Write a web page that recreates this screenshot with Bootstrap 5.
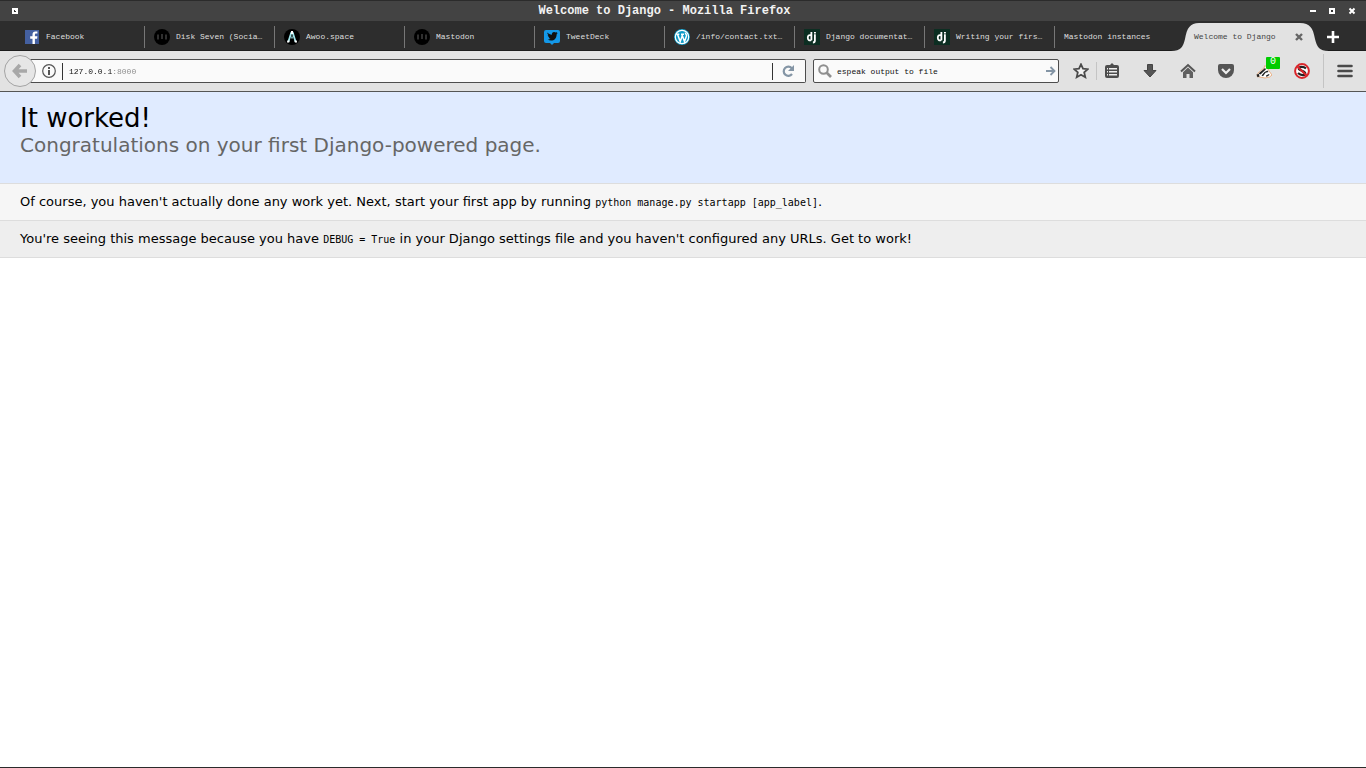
<!DOCTYPE html>
<html lang="en">
<head>
<meta charset="utf-8">
<meta name="viewport" content="width=device-width, initial-scale=1">
<title>Welcome to Django</title>
<link href="https://cdn.jsdelivr.net/npm/bootstrap@5.3.0/dist/css/bootstrap.min.css" rel="stylesheet">
<style>
  body { font-family: "DejaVu Sans", sans-serif; font-size: 13px; line-height: 16px; color: #000; border-bottom: 1px solid #2b2b2b; }
  button { background: none; border: 0; padding: 0; }
  svg { display: block; flex: none; }
  .chrome { font-family: "Liberation Mono", monospace; font-size: 8px; line-height: 12px; }
  .titlebar { height: 21px; background: #434343; border-top: 1px solid #2b2b2b; color: #f2f2f2; }
  .titlebar h1 { font-size: 12px; line-height: 20px; font-weight: 700; }
  .title-start { width: 27px; }
  .title-end { width: 64px; }
  .tabstrip { height: 30px; background: #2d2d2d; border-bottom: 1px solid #1c1c1c; padding-left: 15px; }
  .tab-item { flex: 0 1 130px; min-width: 0; height: 30px; padding: 2px 8px 0 9px; gap: 6px; color: #dedede; text-decoration: none; position: relative; }
  .tab-item::after { content: ""; position: absolute; right: 0; top: 5px; height: 22px; width: 1px; background: #777; }
  .tab-item span { position: relative; }
  .tab-current { color: #444; }
  .tab-current::after, .tab-last::after { display: none; }
  .tab-shape { position: absolute; left: -15px; top: 0; }
  .new-tab { width: 36px; height: 30px; padding-top: 2px; }
  .toolbar { height: 41px; background: #e2e2e2; border-bottom: 1px solid #555; padding-left: 4px; }
  .back-btn { position: relative; z-index: 1; margin-right: -10px; }
  .field { height: 24px; background: #fafafa; border: 1px solid #4d4d4d; border-radius: 2px; }
  .field input { border: 0; padding: 0; outline: 0; background-color: transparent; color: #111; min-width: 0; height: 22px; }
  .url-field { border-left: 0; border-radius: 0 2px 2px 0; padding-left: 16px; margin-right: 7px; gap: 6px; }
  .url-field .url-text { color: transparent; background-image: linear-gradient(90deg, #111 9ch, #888 9ch); -webkit-background-clip: text; background-clip: text; }
  .field-rule { width: 1px; height: 17px; background: #333; }
  .search-field { flex: 0 1 246px; padding: 0 2px 0 4px; margin-right: 7px; gap: 5px; }
  .tool-btn { width: 38px; height: 40px; }
  .slim-btn { width: 30px; }
  .menu-btn { width: 42px; }
  .bar-rule { width: 1px; height: 18px; background: #c4c4c4; }
  .bar-rule-tall { height: 34px; margin-left: 2px; }
  .count { position: absolute; left: 21px; top: 6px; width: 14px; height: 12px; line-height: 10px; font-size: 10px; border-radius: 1px; background: #0c0; color: #fff; }
  .summary { background: #e0ebff; padding: 10px 20px; height: 92px; border-bottom: 1px solid #ddd; }
  .summary h2 { font-size: 26px; line-height: 32px; font-weight: 400; }
  .summary p { font-size: 20px; line-height: 22px; color: #666; }
  .note { padding: 10px 20px; border-bottom: 1px solid #ddd; background: #f6f6f6; }
  .note-alt { background: #eee; }
  .note code { font-family: "DejaVu Sans Mono", monospace; font-size: 10px; line-height: 12px; color: #000; }
</style>
</head>
<body class="d-flex flex-column min-vh-100">
<svg class="d-none" aria-hidden="true">
  <symbol id="masto" viewBox="0 0 16 16"><circle cx="8" cy="8" r="8" fill="#000"/><path d="M4 5.500v5M8 5v5M12 5.500v5" fill="none" stroke="#303030" stroke-width="2"/></symbol>
  <symbol id="dj" viewBox="0 0 16 16"><path fill="#0c2e22" d="M0 0h16v16H0z"/><path d="M7.400 3v8.300M7.200 6.400C4.800 5.500 3.800 6.900 3.800 8.700c0 2.200 1.300 3.200 3.400 2.500M10.900 5.300v6.200c0 1.500-.6 2-2 2" fill="none" stroke="#fff" stroke-width="1.800"/><path fill="#fff" d="M10 3h1.900v1.600H10z"/></symbol>
</svg>

<header class="chrome">
  <div class="titlebar d-flex align-items-center justify-content-between">
    <div class="title-start d-flex">
      <button class="ms-2 ps-1" aria-label="Window menu"><svg width="6" height="6"><path fill="#fff" d="M0 0h6v6H0z"/><path fill="#333" d="M2 2h1v1h1v1H2z"/></svg></button>
    </div>
    <h1 class="m-0 text-truncate">Welcome to Django - Mozilla Firefox</h1>
    <div class="title-end d-flex align-items-center justify-content-end">
      <button aria-label="Window controls" class="me-2"><svg width="48" height="8"><path fill="#fff" d="M0 3h6v2H0zM19 1h6v6h-6z"/><path fill="#333" d="M21 3h2v2h-2z"/><path d="M39.500 1.500l5 5M44.500 1.500l-5 5" stroke="#fff" stroke-width="2"/></svg></button>
    </div>
  </div>

  <nav class="tabstrip d-flex" aria-label="Tabs">
    <a href="#" class="tab-item d-flex align-items-center"><svg width="16" height="16"><path fill="#4460a0" d="M1 1h14v14H1z"/><path fill="#fff" d="M8.500 15V9.700H6.200V7.300h2.300V5.500C8.500 3.400 9.600 2.400 11.500 2.400h1.900v2.200h-1.200c-1 0-1.300.5-1.300 1.300v1.400h2.500l-.3 2.400h-2.200V15z"/></svg><span class="text-nowrap">Facebook</span></a>
    <a href="#" class="tab-item d-flex align-items-center"><svg width="16" height="16"><use href="#masto"/></svg><span class="text-nowrap">Disk Seven (Socia…</span></a>
    <a href="#" class="tab-item d-flex align-items-center"><svg width="16" height="16"><circle cx="8" cy="8" r="8"/><path d="M4.300 13L7 4.500a1 1 0 0 1 2 0L11.700 13M7.300 8.500h1.400" fill="none" stroke="#9fe3e8" stroke-width="1.800"/><path fill="#fff" d="M7 2h2v3H7zM3.300 11.500h2.400l-.6 2H3zM10.300 11.500h2.400l.4 2H11z"/></svg><span class="text-nowrap">Awoo.space</span></a>
    <a href="#" class="tab-item d-flex align-items-center"><svg width="16" height="16"><use href="#masto"/></svg><span class="text-nowrap">Mastodon</span></a>
    <a href="#" class="tab-item d-flex align-items-center"><svg width="16" height="16"><path fill="#1498e8" d="M2 1h12a2 2 0 0 1 2 2v9a2 2 0 0 1-2 2h-4l-2 2-2-2H2a2 2 0 0 1-2-2V3a2 2 0 0 1 2-2z"/><path fill="#111" d="M3.500 3.500C4.700 5 6 5.600 7.900 5.700 7.600 4 8.700 2.900 10.100 2.900c.7 0 1.200.3 1.600.7l1.600-.6-.7 1.300 1.100-.2-1.100 1.300c.1 3.700-2.400 6.200-5.500 6.200-1.300 0-2.500-.4-3.400-1 1.200.1 2.100-.2 2.900-.8-1 0-1.700-.7-1.900-1.500h.9C4.500 8 3.800 7.200 3.800 6.100l.9.200C3.500 5.400 3.200 4.400 3.500 3.500z"/></svg><span class="text-nowrap">TweetDeck</span></a>
    <a href="#" class="tab-item d-flex align-items-center"><svg width="16" height="16"><circle cx="8" cy="8" r="8" fill="#0d9bc8"/><circle cx="8" cy="8" r="6.700" fill="#0d9bc8" stroke="#fff" stroke-width="1.200"/><path d="M2.300 5.200h3M7 5.200h3M3.600 5.400l2.600 7.200L8.200 7M7.900 5.400l2.600 7.200 2-5.600c.5-1.500-1.400-1.900-1-3.400" fill="none" stroke="#fff" stroke-width="1.500"/></svg><span class="text-nowrap">/info/contact.txt…</span></a>
    <a href="#" class="tab-item d-flex align-items-center"><svg width="16" height="16"><use href="#dj"/></svg><span class="text-nowrap">Django documentat…</span></a>
    <a href="#" class="tab-item d-flex align-items-center"><svg width="16" height="16"><use href="#dj"/></svg><span class="text-nowrap">Writing your firs…</span></a>
    <a href="#" class="tab-item tab-last d-flex align-items-center"><span class="text-nowrap">Mastodon instances</span></a>
    <a href="#" class="tab-item tab-current d-flex align-items-center" aria-current="page"><svg class="tab-shape" width="160" height="30"><path fill="#e2e2e2" d="M1 30C11 30 13 26 15 18 17 7 20 2 29 2H130C140 2 143 7 145 18 147 26 149 30 159 30z"/></svg><span class="text-nowrap me-auto">Welcome to Django</span><svg class="position-relative me-1" width="8" height="8"><path d="M1 1l6 6M7 1L1 7" stroke="#666" stroke-width="2.400"/></svg></a>
    <button class="new-tab d-flex align-items-center justify-content-center" aria-label="New tab"><svg width="14" height="14"><path d="M7 1v12M1 7h12" stroke="#fff" stroke-width="2.600"/></svg></button>
  </nav>

  <div class="toolbar d-flex align-items-center">
    <button class="back-btn" aria-label="Back"><svg width="32" height="32"><circle cx="16" cy="16" r="15.500" fill="#e6e6e6" stroke="#a3a3a3"/><path d="M16 10L10.500 16l5.500 6M11 16H23" fill="none" stroke="#a8a8a8" stroke-width="3.600"/></svg></button>
    <div class="field url-field d-flex align-items-center flex-grow-1">
      <svg width="14" height="14"><circle cx="7" cy="7" r="6.300" fill="none" stroke="#555" stroke-width="1.200"/><path fill="#555" d="M6 3h2v2H6zM6 6h2v5H6z"/></svg>
      <span class="field-rule"></span>
      <input class="url-text flex-grow-1" type="text" aria-label="Address" value="127.0.0.1:8000">
      <span class="field-rule"></span>
      <button class="pe-2" aria-label="Reload"><svg width="18" height="14"><path d="M12.800 4.200A4.600 4.600 0 1 0 13 10" fill="none" stroke="#8495a5" stroke-width="2.200"/><path fill="#8495a5" d="M15 1v6H9z"/></svg></button>
    </div>
    <div class="field search-field d-flex align-items-center">
      <svg width="14" height="14"><circle cx="5.500" cy="5.500" r="4.300" fill="none" stroke="#8f8f8f" stroke-width="2"/><path d="M8.500 8.500L13 13" stroke="#8f8f8f" stroke-width="2.600"/></svg>
      <input class="flex-grow-1" type="text" aria-label="Search" value="espeak output to file">
      <button aria-label="Go"><svg width="10" height="10"><path d="M0 5h8M4.500 1L8.500 5 4.500 9" fill="none" stroke="#8495a5" stroke-width="1.800"/></svg></button>
    </div>
    <button class="slim-btn tool-btn d-flex align-items-center justify-content-center" aria-label="Bookmark"><svg width="16" height="16"><path d="M8 1.300l2 4.400 4.800.5-3.600 3.200 1.100 4.800L8 11.700l-4.300 2.500 1.100-4.800L1.200 6.200 6 5.700z" fill="#f2f2f2" stroke="#4a4a4a" stroke-width="1.800"/></svg></button>
    <span class="bar-rule"></span>
    <button class="slim-btn tool-btn d-flex align-items-center justify-content-center me-1" aria-label="Library"><svg width="16" height="16"><path fill="#4d4d4d" d="M3 2h3l2-2 2 2h3a2 2 0 0 1 2 2v9a2 2 0 0 1-2 2H3a2 2 0 0 1-2-2V4a2 2 0 0 1 2-2z"/><path fill="#eee" d="M3 5h1v1.500H3zM5 5h8v1.500H5zM3 8h1v1.500H3zM5 8h8v1.500H5zM3 11h1v1.500H3zM5 11h8v1.500H5z"/></svg></button>
    <button class="tool-btn d-flex align-items-center justify-content-center" aria-label="Downloads"><svg width="16" height="16"><path fill="#555" stroke="#444" d="M5.500 1.500h5v6H14L8 14 2 7.500h3.500z"/></svg></button>
    <button class="tool-btn d-flex align-items-center justify-content-center" aria-label="Home"><svg width="16" height="16"><path d="M1 8.500L8 2l7 6.500" fill="none" stroke="#555" stroke-width="2"/><path fill="#606060" d="M8 4.500l5 4.700V15H9.500v-4h-3v4H3V9.200z"/></svg></button>
    <button class="tool-btn d-flex align-items-center justify-content-center" aria-label="Pocket"><svg width="16" height="16"><path fill="#555" d="M2 1h12a2 2 0 0 1 2 2v4a8 8 0 0 1-16 0V3a2 2 0 0 1 2-2z"/><path d="M4 6l4 4 4-4" fill="none" stroke="#eee" stroke-width="2.200"/></svg></button>
    <button class="tool-btn d-flex align-items-center justify-content-center position-relative" aria-label="Privacy Badger"><svg width="16" height="16"><path fill="#fff" stroke="#e8a06a" stroke-width=".8" d="M1 13.500L2 10 8 5l1-2.500L11.500 5 13 8l3 4-2.500 2L9 15z"/><path fill="#222" d="M.5 11.500L3 11l.5 2.500-2 .8zM2.500 10.500L9 5l1 1.200-5.500 5.300zM5.500 12.500l3-3.500 3-1.500 1 1.500-3 .8-2.500 3.500zM10 12.500l3-1.500.5 1-3 2z"/></svg><span class="count">0</span></button>
    <button class="tool-btn d-flex align-items-center justify-content-center" aria-label="NoScript"><svg width="16" height="16"><circle cx="8" cy="8" r="7" fill="#fff"/><path d="M12 5.500C9.500 3 5 3.500 4.800 5.500S11.500 8 11.300 10.300 7 13 4 10" fill="none" stroke="#222" stroke-width="2.200"/><circle cx="8" cy="8" r="6.900" fill="none" stroke="#d9262b" stroke-width="2"/><path d="M3.500 3.500l9 9" stroke="#d9262b" stroke-width="2.200"/></svg></button>
    <span class="bar-rule bar-rule-tall"></span>
    <button class="tool-btn menu-btn d-flex align-items-center justify-content-center" aria-label="Menu"><svg width="16" height="14"><path d="M1.500 2h13M1.500 7h13M1.500 12h13" stroke="#4a4a4a" stroke-width="2.600" stroke-linecap="round"/></svg></button>
  </div>
</header>

<main class="flex-grow-1">
  <section class="summary">
    <h2 class="m-0">It worked!</h2>
    <p class="m-0">Congratulations on your first Django-powered page.</p>
  </section>
  <p class="note m-0">Of course, you haven't actually done any work yet. Next, start your first app by running <code>python manage.py startapp [app_label]</code>.</p>
  <p class="note note-alt m-0">You're seeing this message because you have <code>DEBUG = True</code> in your Django settings file and you haven't configured any URLs. Get to work!</p>
</main>
<script src="https://cdn.jsdelivr.net/npm/bootstrap@5.3.0/dist/js/bootstrap.bundle.min.js"></script>
</body>
</html>
